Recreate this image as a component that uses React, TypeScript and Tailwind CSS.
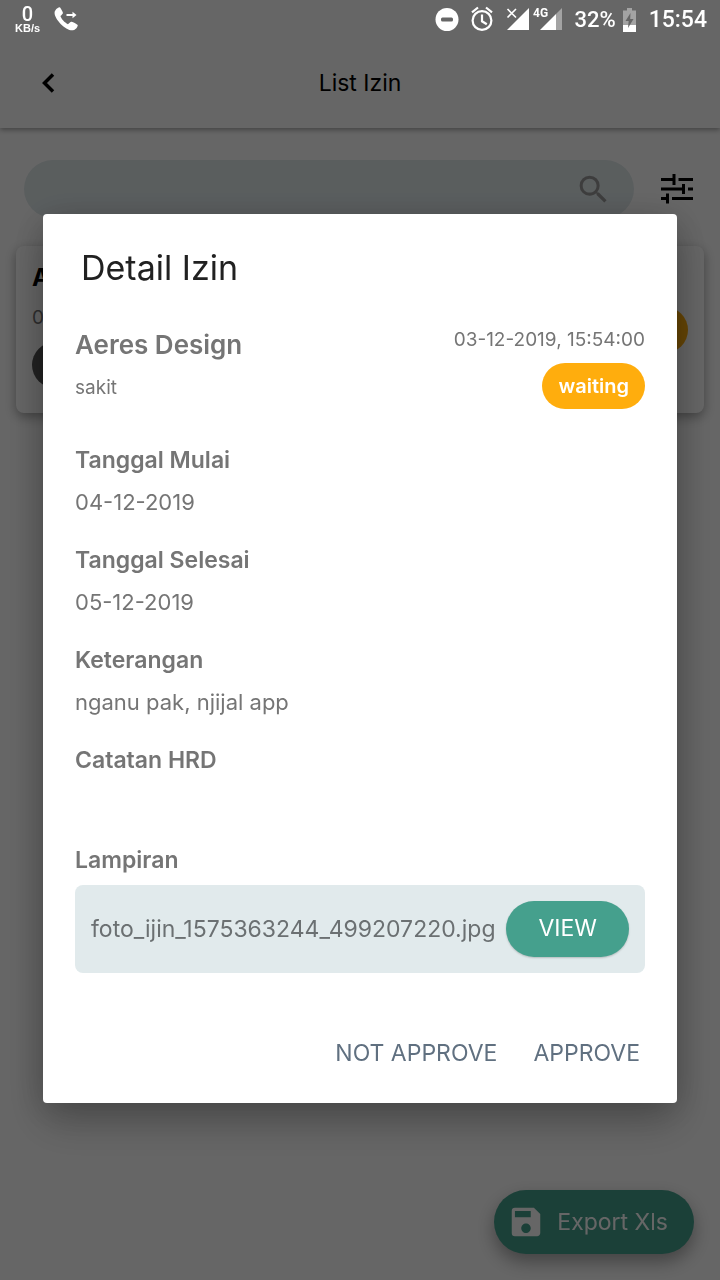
import React from "react";
import { MdSave, MdSearch } from "react-icons/md";

function StatusBar() {
  return (
    <div className="flex h-9 w-full shrink-0 items-start justify-between pl-[15px] pr-[13px] text-white">
      <div className="flex items-start gap-[14px]">
        <div className="flex flex-col items-center pt-[5px] font-['Liberation_Sans']">
          <span className="font-[Roboto] text-xl leading-[18px] font-medium">0</span>
          <span className="text-[11px] leading-[10px] font-bold">KB/s</span>
        </div>
        <svg className="mt-[7px] h-6 w-[26px]" viewBox="0 0 26 24" fill="currentColor" aria-hidden="true">
          <path d="M1.5 3.2C2.4 1.7 4.2.4 5.9.3c1.2 1.5 2.4 3.7 3 5.5.2 1-1.6 2.3-2.5 3.3.9 2.9 4.2 6.6 7.5 8.1 1.300-1 2.600-2.800 3.700-2.500 1.900.5 4.500 1.900 6.100 3.200.4 2-2.400 5.100-4.600 5.400C11.600 24.200 0 11.500.6 5.500c0-.9.3-1.700.9-2.300z" />
          <path d="M12.500 7h6V4.800L22.500 8l-4 3.200V9h-6z" />
        </svg>
      </div>
      <div className="flex h-10 items-center">
        <svg className="h-[30px] w-[128px]" viewBox="0 0 128 30" fill="none" aria-hidden="true">
          <circle cx="13" cy="14.500" r="11.500" fill="#fff" />
          <rect x="7" y="12.500" width="12" height="4" rx="1.500" fill="#666" />
          <g stroke="#fff" strokeWidth="2.200">
            <circle cx="48" cy="15.500" r="9.400" />
            <path d="M48 9.500v6.800l4.800 3M38 7.300l6-4.800M58 7.300l-6-4.800" />
          </g>
          <path d="M95 3v22H73z" fill="#fff" />
          <path d="M73.500 4l8.500 8.500M82 4l-8.500 8.500" stroke="#fff" strokeWidth="1.600" />
          <path d="M128 3v22h-6V9z" fill="#a3a3a3" />
          <path d="M122 9v16h-16z" fill="#fff" />
          <text x="99" y="12" fill="#fff" fontFamily="Roboto" fontSize="12" fontWeight="700">4G</text>
        </svg>
        <span className="ml-3 font-[Roboto] text-[22px] leading-10 font-medium">32%</span>
        <svg className="ml-[7px] h-6 w-[13px]" viewBox="0 0 13 24" aria-hidden="true">
          <path d="M4 0h5v2.500h4V24H0V2.500h4z" fill="#a3a3a3" />
          <path d="M0 17h13v7H0z" fill="#fff" />
          <path d="M7.500 5L2.500 13h3.200l-.7 7 5.500-9H7.200z" fill="#666" />
        </svg>
        <time className="ml-[13px] font-[Roboto] text-[23px] leading-10 font-medium">15:54</time>
      </div>
    </div>
  );
}

function ListPage() {
  return (
    <div className="min-h-screen bg-white">
      <header className="grid h-32 grid-cols-[96px_1fr_96px] items-center bg-white pt-[38px] shadow-[0_2px_5px_rgba(0,0,0,0.35)]">
        <button type="button" aria-label="Kembali" className="flex h-14 items-center justify-center">
          <svg className="h-5 w-4" viewBox="0 0 16 20" fill="none" stroke="#000" strokeWidth="3.500" aria-hidden="true">
            <path d="M13 1.500L4.500 10l8.500 8.500" />
          </svg>
        </button>
        <h1 className="text-center text-[23px] leading-8">List Izin</h1>
      </header>
      <div className="flex items-center gap-[27px] pt-8 pr-[27px] pl-6">
        <label className="flex h-[58px] flex-1 items-center rounded-full bg-[#e1eaec] pr-[22px] pl-6">
          <input type="search" aria-label="Cari izin" className="min-w-0 flex-1 bg-transparent text-[22px] outline-none" />
          <MdSearch className="size-[37px] text-[#9a9a9a]" />
        </label>
        <button type="button" aria-label="Filter">
          <svg className="block h-[30px] w-8" viewBox="0 0 32 30" stroke="#000" strokeWidth="3" fill="none" aria-hidden="true">
            <path d="M0 5.500h13M17.500 5.500H32M13 0v11M0 15h22M27 15h5M22.500 10v10M0 24.500h6M11 24.500h21M6.500 19.500v10" />
          </svg>
        </button>
      </div>
      <section className="mx-4 mt-7 flex h-[167px] items-start justify-between rounded-lg bg-white p-4 shadow-[0_4px_12px_rgba(0,0,0,0.35)]">
        <div className="flex flex-col items-start">
          <h2 className="text-2xl leading-8 font-bold">Aeres Design</h2>
          <p className="mt-2 text-[19px] leading-8 text-[#757575]">03-12-2019</p>
          <span className="mt-2 rounded-full bg-[#555] px-4 text-[19px] leading-[46px] font-semibold text-white">sakit</span>
        </div>
        <span className="my-auto rounded-full bg-[#ffad0d] px-4 text-xl leading-[46px] font-semibold text-white">waiting</span>
      </section>
      <button
        type="button"
        className="fixed right-[26px] bottom-[26px] flex h-16 items-center gap-3 rounded-full bg-[#45a08d] pr-[26px] pl-[13px] text-[23px] text-white shadow-[0_8px_18px_rgba(0,0,0,0.35)]"
      >
        <MdSave className="size-[38px]" />
        Export Xls
      </button>
    </div>
  );
}

const fields = [
  { label: "Tanggal Mulai", value: "04-12-2019" },
  { label: "Tanggal Selesai", value: "05-12-2019" },
  { label: "Keterangan", value: "nganu pak, njijal app" },
  { label: "Catatan HRD", value: "" },
];

function DetailDialog() {
  return (
    <div
      role="dialog"
      aria-modal="true"
      aria-labelledby="detail-title"
      className="mx-[43px] my-auto rounded-[4px] bg-white text-[#757575] shadow-[0_20px_44px_rgba(0,0,0,0.2),0_6px_36px_rgba(0,0,0,0.2)]"
    >
      <h2 id="detail-title" className="px-[38px] pt-[34px] text-[34px] leading-10 text-[#212121]">
        Detail Izin
      </h2>
      <div className="px-8 pt-10">
        <div className="flex items-start justify-between">
          <div>
            <h3 className="text-[26px] leading-[34px] font-semibold">Aeres Design</h3>
            <p className="mt-3 text-[19px] leading-7">sakit</p>
          </div>
          <div className="flex flex-col items-end">
            <time className="text-[19px] leading-6">03-12-2019, 15:54:00</time>
            <span className="mt-[11px] rounded-full bg-[#ffad0d] px-4 text-xl leading-[46px] font-semibold text-white">
              waiting
            </span>
          </div>
        </div>
        <dl className="mt-9 leading-[30px]">
          {fields.map((field) => (
            <div key={field.label} className="mb-7">
              <dt className="text-[23px] font-semibold">{field.label}</dt>
              <dd className="mt-3 min-h-[30px] text-[22px]">{field.value}</dd>
            </div>
          ))}
        </dl>
        <h3 className="text-[23px] leading-[30px] font-semibold">Lampiran</h3>
        <div className="mt-[10px] flex items-center justify-between rounded-lg bg-[#e1eaec] p-4">
          <span className="min-w-0 truncate text-[23px] leading-[30px] text-[#6b7072]">foto_ijin_1575363244_499207220.jpg</span>
          <button
            type="button"
            className="h-14 shrink-0 rounded-full bg-[#45a08d] px-8 text-[23px] text-white shadow-[0_1px_2px_rgba(0,0,0,0.2)]"
          >
            VIEW
          </button>
        </div>
      </div>
      <div className="mt-[53px] flex justify-end gap-1 pr-[21px] pb-[21px] text-[23px] text-[#607080]">
        <button type="button" className="h-14 px-4">NOT APPROVE</button>
        <button type="button" className="h-14 px-4">APPROVE</button>
      </div>
    </div>
  );
}

export default function App() {
  return (
    <div className="font-[Inter,sans-serif]">
      <ListPage />
      <div className="fixed inset-0 flex flex-col overflow-y-auto bg-black/60">
        <StatusBar />
        <DetailDialog />
      </div>
    </div>
  );
}
